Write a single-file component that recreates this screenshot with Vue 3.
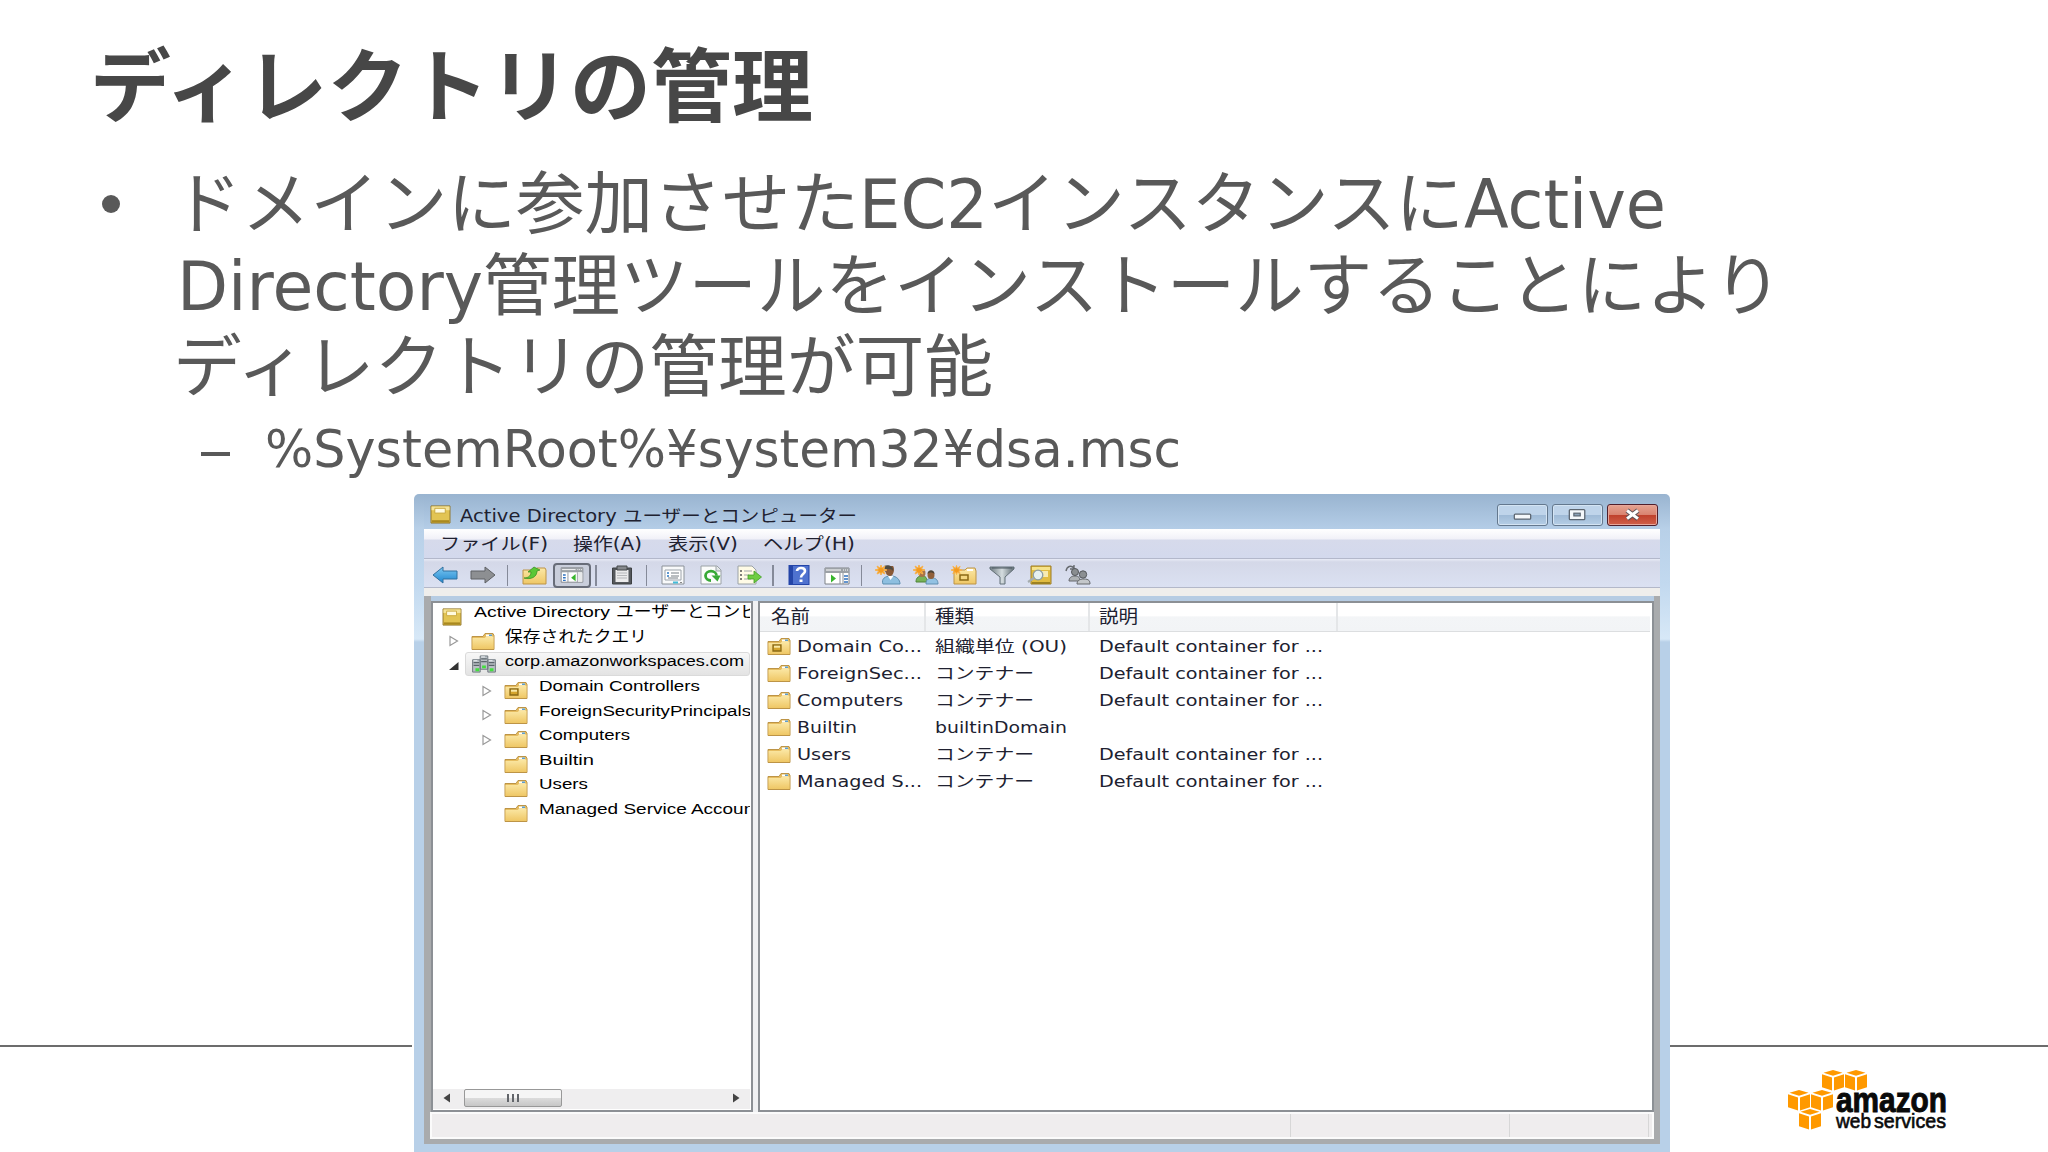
<script setup>
const lines = [
  [
    { text: "ドメインに参加させた", width: 686 },
    { text: "EC2", width: 129 },
    { text: "インスタンスに", width: 476 },
    { text: "Active", width: 202 },
  ],
  [
    { text: "Directory", width: 306 },
    { text: "管理ツールをインストールすることにより", width: 1299 },
  ],
  [{ text: "ディレクトリの管理が可能", width: 820 }],
];

const menus = [
  { text: "ファイル(F)", width: 108, slot: 133 },
  { text: "操作(A)", width: 69, slot: 95 },
  { text: "表示(V)", width: 70, slot: 95 },
  { text: "ヘルプ(H)", width: 92, slot: 100 },
];

const tools = [
  "back", "forward", "sep", "up", "panel", "sep", "clipboard", "sep",
  "props", "refresh", "export", "sep", "help", "run", "sep",
  "user", "group", "new-ou", "filter", "find", "add-group",
];

const tree = [
  { text: "保存されたクエリ", width: 142, icon: "folder", arrow: "closed", level: 1 },
  { text: "corp.amazonworkspaces.com", width: 239, icon: "domain", arrow: "open", level: 1, selected: true },
  { text: "Domain Controllers", width: 161, icon: "ou", arrow: "closed", level: 2 },
  { text: "ForeignSecurityPrincipals", width: 212, icon: "folder", arrow: "closed", level: 2 },
  { text: "Computers", width: 91, icon: "folder", arrow: "closed", level: 2 },
  { text: "Builtin", width: 55, icon: "folder", level: 2 },
  { text: "Users", width: 49, icon: "folder", level: 2 },
  { text: "Managed Service Accounts", width: 230, icon: "folder", level: 2 },
];

const desc = "Default container for ...";
const rows = [
  { name: "Domain Co...", width: 125, icon: "ou", type: "組織単位 (OU)", typeWidth: 132, desc },
  { name: "ForeignSec...", width: 125, icon: "folder", type: "コンテナー", typeWidth: 99, desc },
  { name: "Computers", width: 106, icon: "folder", type: "コンテナー", typeWidth: 99, desc },
  { name: "Builtin", width: 60, icon: "folder", type: "builtinDomain", typeWidth: 132, desc: "" },
  { name: "Users", width: 54, icon: "folder", type: "コンテナー", typeWidth: 99, desc },
  { name: "Managed S...", width: 125, icon: "folder", type: "コンテナー", typeWidth: 99, desc },
];

// squeeze or stretch a label to the given width
const vFit = {
  mounted(el, { value }) {
    const natural = el.getBoundingClientRect().width;
    if (!natural) return;
    el.style.transform = `scaleX(${value / natural})`;
    el.style.marginRight = `${value - natural}px`;
  },
};
</script>

<template>
  <svg class="defs" width="0" height="0">
    <defs>
      <linearGradient id="gold" x1="0" y1="0" x2="0" y2="1">
        <stop offset="0" stop-color="#fbe8a6" />
        <stop offset="1" stop-color="#efc765" />
      </linearGradient>
      <linearGradient id="blue" x1="0" y1="0" x2="0" y2="1">
        <stop offset="0" stop-color="#7cc8f2" />
        <stop offset="1" stop-color="#1f86cf" />
      </linearGradient>
      <linearGradient id="steel" x1="0" y1="0" x2="1" y2="0">
        <stop offset="0" stop-color="#6d7a80" />
        <stop offset="0.5" stop-color="#d5dde0" />
        <stop offset="1" stop-color="#606d74" />
      </linearGradient>
    </defs>
    <symbol id="book" viewBox="0 0 22 20">
      <path d="M1 1h20v18H1z" fill="#e2c453" stroke="#8e7429" />
      <path d="M1.500 1.500h19v4h-19z" fill="#f4e39a" />
      <path d="M5 3.500h11v5H5z" fill="#fffbe0" stroke="#c9a83d" />
      <path d="M2 16h18v2.500H2z" fill="#a98920" />
    </symbol>
    <symbol id="folder" viewBox="0 0 24 18">
      <path d="M1 4.500h11l2-3h8l1 2v14H1z" fill="#e6bd60" stroke="#bd9446" />
      <path d="M15 2.500h6v2h-6z" fill="#fff" />
      <path d="M18 2.500h3v1.500h-3z" fill="#5c9fce" />
      <path d="M1.500 6h12l2-1.500h7v12.500h-21z" fill="url(#gold)" />
    </symbol>
    <symbol id="ou" viewBox="0 0 24 18">
      <use href="#folder" />
      <path d="M6 8h8v6H6z" fill="#d5a52d" stroke="#8b6914" stroke-width="1.300" />
      <path d="M7 8.700h6v2H7z" fill="#f9e9a9" />
    </symbol>
    <symbol id="domain" viewBox="0 0 26 20">
      <g fill="#b9c0c5" stroke="#6d767d">
        <path d="M9 1h8v14H9zM1 5h8v13H1zM17 5h8v13h-8z" />
      </g>
      <path d="M10 4h6M10 7h6M2 8h6M2 11h6M18 8h6M18 11h6" stroke="#5b646b" stroke-width="1.300" />
      <path d="M10 2h4M2 6h4M18 6h4" stroke="#eef2f4" />
      <path d="M11 11h4v3h-4zM4 14h4v3H4zM19 14h4v3h-4z" fill="#43df3f" />
    </symbol>
    <symbol id="back" viewBox="0 0 26 20">
      <path d="M1 10L11 2v4h14v8H11v4z" fill="url(#blue)" stroke="#31709f" stroke-linejoin="round" />
    </symbol>
    <symbol id="forward" viewBox="0 0 26 20">
      <path d="M25 10L15 2v4H1v8h14v4z" fill="#8d8f92" stroke="#5e6064" stroke-linejoin="round" />
    </symbol>
    <symbol id="up" viewBox="0 0 26 20">
      <path d="M2 5h12l2-2h8l1 2v14H2z" fill="url(#gold)" stroke="#bd9446" />
      <path d="M3 13c5 0 7-3 7-6H7l6-5 6 3-3 1c0 6-6 9-13 7z" fill="#5bc736" stroke="#31891e" stroke-width="0.700" />
    </symbol>
    <symbol id="panel" viewBox="0 0 26 20">
      <path d="M1 2h24v16H1z" fill="#fff" stroke="#7e8287" />
      <path d="M1 2h24v5H1z" fill="#9ca1a6" />
      <path d="M2 4h15" stroke="#fff" />
      <path d="M19 4h1M21 4h1M23 4h1" stroke="#fff" />
      <path d="M8.500 7v11M19 7v11" stroke="#8d9298" />
      <path d="M3 10h3M3 13h3M3 16h3" stroke="#3172bf" stroke-width="1.500" />
      <path d="M17 9v8l-5-4z" fill="#38b52d" />
      <path d="M19.500 7.500h5v10h-5z" fill="#e7e9ea" />
    </symbol>
    <symbol id="clipboard" viewBox="0 0 26 20">
      <path d="M3.500 3h19v16h-19z" fill="#55585c" stroke="#3d4043" />
      <path d="M6.500 5h13v12h-13z" fill="#ebebec" />
      <path d="M8 1h10v4H8z" fill="#85888c" stroke="#45484b" />
      <path d="M8 8h10M8 10.500h10M8 13h10" stroke="#b5b7ba" />
    </symbol>
    <symbol id="props" viewBox="0 0 26 20">
      <path d="M2 1h22v18H2z" fill="#f8f9fa" stroke="#8b9198" />
      <path d="M5 5h16v10H5z" fill="#fff" stroke="#9ca3aa" />
      <path d="M7 8h2M7 11h2" stroke="#2d78c2" stroke-width="1.500" />
      <path d="M11 8h8M11 11h8M8 13h10" stroke="#777e85" />
      <path d="M13 17.500h5" stroke="#43bbd9" stroke-width="2" />
      <path d="M20 17.500h2" stroke="#888" />
    </symbol>
    <symbol id="refresh" viewBox="0 0 26 20">
      <path d="M3 1h16l4 4v14H3z" fill="#fbfcfb" stroke="#9ba2a6" />
      <path d="M18 1v5h5" fill="#dfe4e6" stroke="#9ba2a6" />
      <path d="M13 15.500a5.500 4.700 0 1 1 5.500-4.700" fill="none" stroke="#38a936" stroke-width="2.800" />
      <path d="M13.500 10.500h9l-3 6z" fill="#38a936" />
    </symbol>
    <symbol id="export" viewBox="0 0 26 20">
      <path d="M2 1h14l4 4v14H2z" fill="#fffbe6" stroke="#9ba2a6" />
      <path d="M4 6h2M4 10h2M4 14h2" stroke="#555" stroke-width="1.500" />
      <path d="M8 6h8M8 10h5M8 14h7" stroke="#a0a5a8" />
      <path d="M12 10h6V6l7.500 6-7.500 6v-4h-6z" fill="#6fcd43" stroke="#419f25" stroke-width="0.800" />
    </symbol>
    <symbol id="help" viewBox="0 0 26 20">
      <path d="M2.500 0h21v20h-21z" fill="#2445a8" />
      <path d="M7 1h15.500v18H7z" fill="#4f72cf" />
      <path d="M11 6c0-4 8-4 8 0 0 3-4 3-4 6.500" fill="none" stroke="#fff" stroke-width="2.600" />
      <path d="M13.500 14.500h3v2.500h-3z" fill="#fff" />
    </symbol>
    <symbol id="run" viewBox="0 0 26 20">
      <path d="M1 3h24v16H1z" fill="#fff" stroke="#7e8287" />
      <path d="M1 3h24v5H1z" fill="#9ca1a6" />
      <path d="M2 5h15M19 5h1M21 5h1M23 5h1" stroke="#fff" />
      <path d="M16 8v11M19 8v11" stroke="#8d9298" />
      <path d="M7 9.500v8l5-4z" fill="#38b52d" />
      <path d="M20 11h4M20 14h4M20 17h4" stroke="#3172bf" stroke-width="1.300" />
    </symbol>
    <symbol id="spark" viewBox="0 0 12 10">
      <path d="M6 0l1 3 3-2-1.500 3 3.500 1-3.500 1L10 9 7 7.500 6 10 5 7.500 2 9l1.500-3L0 5l3.500-1L2 1l3 2z" fill="#f49a1d" stroke="#f7b24d" />
    </symbol>
    <symbol id="user" viewBox="0 0 26 20">
      <path d="M8 19c-2-5 2-8 8-8s9 4 9 8z" fill="#8ebfe0" stroke="#5d8fb1" />
      <path d="M13 11l2.500 4 3-4z" fill="#fff" />
      <path d="M10 1h8c2 2 1 10-3 10-4 0-4-4-5-5z" fill="#8b5a37" />
      <path d="M9 1c4-2 10 0 9 5-1-2-4-2-6-2-1 0-1 2-2 3z" fill="#4e4b42" />
      <use href="#spark" x="0" y="0" width="12" height="10" />
    </symbol>
    <symbol id="group" viewBox="0 0 26 20">
      <path d="M3 17c0-4 2-6 6-6s5 2 5 6z" fill="#77b257" stroke="#4e8338" />
      <ellipse cx="9" cy="8" rx="3.500" ry="4" fill="#a77347" />
      <path d="M13 19c0-4 2-6 6-6s6 2 6 6z" fill="#93c2e3" stroke="#6190b2" />
      <ellipse cx="18" cy="10" rx="3.500" ry="4" fill="#91603b" />
      <path d="M14.500 9c0-5 7-5 7 0-2-2-5-2-7 0z" fill="#4c4336" />
      <use href="#spark" x="0" y="0" width="12" height="10" />
    </symbol>
    <symbol id="new-ou" viewBox="0 0 26 20">
      <path d="M3 5h11l2-2h8l1 3v13H3z" fill="url(#gold)" stroke="#bd9446" />
      <path d="M16 4h6v2h-6z" fill="#fff" />
      <path d="M9 10h8v5H9z" fill="#f4d781" stroke="#8b6914" stroke-width="1.500" />
      <use href="#spark" x="0" y="0" width="11" height="10" />
    </symbol>
    <symbol id="filter" viewBox="0 0 26 20">
      <path d="M1 2h24v2l-9 8v7h-5v-7L1 4z" fill="url(#steel)" stroke="#637078" />
      <path d="M3 3h20" stroke="#4b575e" />
    </symbol>
    <symbol id="find" viewBox="0 0 26 20">
      <path d="M4 1h20v18H4z" fill="#e1bc42" stroke="#9c7d25" />
      <path d="M5 2h18v3H5z" fill="#f6e38a" />
      <path d="M10 6h11v6H10z" fill="#f7eab0" />
      <path d="M5 17h18v2H5z" fill="#9d8122" />
      <circle cx="11" cy="10" r="4.800" fill="#e6f0ef" stroke="#8d9ca0" stroke-width="1.300" />
      <path d="M7 13l-6 4" stroke="#a5acae" stroke-width="2.200" />
    </symbol>
    <symbol id="add-group" viewBox="0 0 26 20">
      <path d="M1 6c1-5 5-6 8-3M9 0v4H5" fill="none" stroke="#666a6e" stroke-width="1.400" />
      <path d="M4 16c0-3 2-5 6-5s5 2 5 5z" fill="#aeb2b5" stroke="#66696d" />
      <circle cx="10" cy="7" r="3.500" fill="#898d90" stroke="#55585c" />
      <path d="M12 19c0-3 2-5 7-5s6 2 6 5z" fill="#c4c7ca" stroke="#66696d" />
      <circle cx="18" cy="9.500" r="3.700" fill="#8b8f92" stroke="#55585c" />
    </symbol>
    <symbol id="cube" viewBox="0 0 22 21">
      <path d="M1.500 2.800L11 0l9.500 2.800L11 5.800zM0 4.300l10 3.100v13L0 17.300zM22 4.300L12 7.400v13l10-3.100z" fill="#ff9900" />
    </symbol>
  </svg>

  <main class="slide">
    <header class="intro">
      <h1 class="title"><span v-fit="723" class="fit">ディレクトリの管理</span></h1>
      <div class="point">
        <i class="dot"></i>
        <div>
          <p v-for="(line, i) in lines" :key="i" class="line">
            <span v-for="part in line" :key="part.text" v-fit="part.width" class="fit">{{ part.text }}</span>
          </p>
        </div>
      </div>
      <div class="subpoint">
        <i class="dash"></i>
        <p>
          <span v-fit="401" class="fit">%SystemRoot%</span>
          <span v-fit="515" class="fit">¥system32¥dsa.msc</span>
        </p>
      </div>
    </header>

    <div class="stage">
      <aside class="side left"></aside>

      <section class="window">
        <div class="titlebar">
          <svg class="app-icon"><use href="#book" /></svg>
          <span v-fit="397" class="fit caption">Active Directory ユーザーとコンピューター</span>
          <div class="controls">
            <button type="button" class="control">
              <svg viewBox="0 0 50 22"><rect x="16" y="10" width="18" height="5.500" rx="1" fill="#f4f7fa" stroke="#5b6570" stroke-width="1.400" /></svg>
            </button>
            <button type="button" class="control">
              <svg viewBox="0 0 50 22">
                <rect x="16" y="5" width="17" height="11" rx="1" fill="#f4f7fa" stroke="#5b6570" stroke-width="1.400" />
                <rect x="21" y="9" width="7" height="3" fill="#8ba2b8" stroke="#5b6570" stroke-width="1.300" />
              </svg>
            </button>
            <button type="button" class="control close">
              <svg viewBox="0 0 50 22">
                <path d="M19 6l12 9M31 6L19 15" stroke="#5e5258" stroke-width="5.500" />
                <path d="M19 6l12 9M31 6L19 15" stroke="#fff" stroke-width="3.400" />
              </svg>
            </button>
          </div>
        </div>

        <div class="client">
          <nav class="menubar">
            <div v-for="menu in menus" :key="menu.text" :style="{ width: menu.slot + 'px' }">
              <span v-fit="menu.width" class="fit">{{ menu.text }}</span>
            </div>
          </nav>
          <div class="toolbar">
            <div v-for="(tool, i) in tools" :key="i" class="tool" :class="tool">
              <svg v-if="tool !== 'sep'"><use :href="'#' + tool" /></svg>
            </div>
          </div>
          <div class="strip"></div>

          <div class="body">
            <div class="panes">
              <div class="tree">
                <div class="node root">
                  <svg class="root-icon"><use href="#book" /></svg>
                  <span v-fit="136" class="fit">Active Directory</span>
                  <span v-fit="142" class="fit root-tail">ユーザーとコンピ</span>
                </div>
                <div v-for="node in tree" :key="node.text" class="node" :class="'level-' + node.level">
                  <div class="arrow">
                    <svg v-if="node.arrow === 'closed'" viewBox="0 0 10 12"><path d="M1 1.500l7.500 4.500L1 10.500z" fill="#fff" stroke="#999" stroke-width="1.200" /></svg>
                    <svg v-if="node.arrow === 'open'" viewBox="0 0 10 12"><path d="M9.500 2v8H0z" fill="#333" /></svg>
                  </div>
                  <div class="label" :class="{ selected: node.selected }">
                    <svg class="node-icon" :class="node.icon"><use :href="'#' + node.icon" /></svg>
                    <span v-fit="node.width" class="fit">{{ node.text }}</span>
                  </div>
                </div>
                <div class="scrollbar">
                  <svg class="scroll-arrow" viewBox="0 0 8 10"><path d="M7 0.500v9L0.500 5z" fill="#444" /></svg>
                  <div class="thumb"><i></i><i></i><i></i></div>
                  <svg class="scroll-arrow end" viewBox="0 0 8 10"><path d="M1 0.500v9L7.500 5z" fill="#444" /></svg>
                </div>
              </div>

              <div class="list">
                <div class="list-head">
                  <div><span v-fit="39" class="fit">名前</span></div>
                  <div><span v-fit="39" class="fit">種類</span></div>
                  <div><span v-fit="39" class="fit">説明</span></div>
                </div>
                <div v-for="row in rows" :key="row.name" class="list-row">
                  <div class="name">
                    <svg><use :href="'#' + row.icon" /></svg>
                    <span v-fit="row.width" class="fit">{{ row.name }}</span>
                  </div>
                  <div><span v-fit="row.typeWidth" class="fit">{{ row.type }}</span></div>
                  <div><span v-fit="224" class="fit">{{ row.desc }}</span></div>
                </div>
              </div>
            </div>
            <div class="status"><i></i><i></i><i></i></div>
          </div>
        </div>
      </section>

      <aside class="side right">
        <div class="logo">
          <div class="cubes">
            <div class="cube-row top"><svg><use href="#cube" /></svg><svg><use href="#cube" /></svg></div>
            <div class="cube-row"><svg><use href="#cube" /></svg><svg><use href="#cube" /></svg></div>
            <div class="cube-row bottom"><svg><use href="#cube" /></svg></div>
          </div>
          <div class="brand">
            <div class="amazon"><span v-fit="111" class="fit">amazon</span></div>
            <div class="services">
              <span v-fit="35" class="fit">web</span>
              <span v-fit="72" class="fit">services</span>
            </div>
          </div>
        </div>
      </aside>
    </div>
  </main>
</template>

<style>
body {
  margin: 0;
  background: #fff;
}
</style>

<style scoped>
.defs {
  display: block;
  position: absolute;
}
.slide {
  width: 2048px;
  height: 1152px;
  overflow: hidden;
  color: #595959;
  background: #fff;
  font-family: "DejaVu Sans", "Noto Sans CJK JP", sans-serif;
}
.fit {
  display: inline-block;
  flex: none;
  white-space: nowrap;
  transform-origin: 0 50%;
}

/* slide text */
.intro {
  height: 494px;
  box-sizing: border-box;
  padding: 20px 0 0 94px;
}
.title {
  margin: 0 0 0 -4px;
  height: 120px;
  color: #474747;
  font-family: "Noto Sans CJK JP", sans-serif;
  font-size: 80px;
  font-weight: 700;
  line-height: 120px;
}
.point {
  display: flex;
  padding-top: 24px;
}
.dot {
  width: 18px;
  height: 18px;
  margin: 31px 57px 0 8px;
  border-radius: 50%;
  background: #595959;
}
.line {
  display: flex;
  height: 81.500px;
  margin: 0;
  font-size: 68px;
  line-height: 81.500px;
}
.line:nth-child(odd) {
  margin-left: -4px;
}
.subpoint {
  display: flex;
  align-items: center;
  height: 66px;
  padding: 7px 0 0 107px;
  font-size: 52px;
  line-height: 66px;
}
.subpoint p {
  display: flex;
  margin: 0;
}
.dash {
  width: 29px;
  height: 4px;
  margin: 11px 35px 0 0;
  background: #595959;
}

/* stage */
.stage {
  display: grid;
  grid-template-columns: 414px 1256px 1fr;
  height: 658px;
}
.side {
  margin-top: 551px;
  border-top: 2px solid #6c6c6c;
}
.side.left {
  margin-right: 2px;
}

/* window frame */
.window {
  display: flex;
  flex-direction: column;
  box-sizing: border-box;
  padding: 0 10px 8px;
  border-radius: 5px 5px 0 0;
  background: linear-gradient(#99b4d0 0, #b8d0e8 35px, #c2d9ef 90px, #d7e8f7 145px, #b8d0e8 148px);
  color: #202130;
}
.titlebar {
  display: flex;
  align-items: center;
  height: 35px;
  padding-left: 6px;
  font-size: 17px;
  line-height: 34px;
  background: linear-gradient(#99b4d0, #b4cde7);
}
.app-icon {
  width: 21px;
  height: 19px;
  margin: 6px 9px 0 0;
}
.caption {
  margin-top: 8px;
}
.controls {
  display: flex;
  gap: 4px;
  margin: 7px 2px 0 auto;
}
.control {
  box-sizing: border-box;
  width: 51px;
  height: 22px;
  padding: 0;
  border: 1.500px solid #64788e;
  border-radius: 3px;
  background: linear-gradient(#bfd4ea 50%, #9fbad6 50%, #b5cee6);
  box-shadow: inset 0 0 0 1px #d4e4f3;
}
.control svg {
  display: block;
  width: 100%;
  height: 100%;
}
.control.close {
  border-color: #501f2b;
  background: linear-gradient(#e5a391 0, #d9826f 50%, #bf402b 50%, #d0604a);
  box-shadow: inset 0 0 0 1px #e7a69a;
}
.client {
  display: flex;
  flex: 1;
  flex-direction: column;
}
.menubar {
  display: flex;
  height: 30px;
  box-sizing: border-box;
  padding-left: 16px;
  border-bottom: 1px solid #b3b8cb;
  background: linear-gradient(#fff 0, #f1f1f8 10px, #d6daeb 11px, #d3d9ed);
  font-size: 17px;
  line-height: 31px;
}
.toolbar {
  display: flex;
  align-items: center;
  height: 29px;
  box-sizing: border-box;
  padding: 4px 0 0 2px;
  border-bottom: 1.500px solid #b3b8c9;
  background: linear-gradient(#e8ebf6 0, #d4d8e8 3px, #dbe1f2);
}
.tool {
  display: flex;
  align-items: center;
  justify-content: center;
  width: 38.050px;
  height: 24px;
}
.tool svg {
  width: 26px;
  height: 20px;
}
.tool.sep {
  width: 12.500px;
}
.tool.sep::before {
  content: "";
  width: 1.500px;
  height: 21px;
  margin-right: 2px;
  background: #858a99;
}
.tool.panel {
  box-sizing: border-box;
  height: 25px;
  border: 2px solid #686d79;
  border-radius: 4px;
  background: #c9cedb;
}
.tool.panel svg {
  height: 18px;
}
.strip {
  height: 8px;
  background: #efeeec;
}
.body {
  display: flex;
  flex: 1;
  flex-direction: column;
  box-sizing: border-box;
  padding: 0 6px 5px 7px;
  background: #a9abad;
}

/* panes */
.panes {
  display: grid;
  grid-template-columns: 322px 896px;
  gap: 5px;
  height: 516px;
  box-sizing: border-box;
  padding-top: 5px;
  background: linear-gradient(#b6cce3 5px, #f0f1f3 5px);
}
.tree,
.list {
  box-sizing: border-box;
  min-width: 0;
  overflow: hidden;
  border: 2px solid #8c9095;
  background: #fff;
}
.tree {
  display: flex;
  flex-direction: column;
  padding-right: 1px;
  color: #000;
  font-family: "Liberation Sans", "Noto Sans CJK JP", sans-serif;
  font-size: 15.500px;
}
.node {
  display: flex;
  flex: none;
  align-items: center;
  height: 24.600px;
  overflow: hidden;
  line-height: 18px;
}
.node.root {
  padding-left: 9px;
}
.root .fit {
  margin-top: -6px;
}
.root-icon {
  flex: none;
  width: 20px;
  height: 18px;
  margin: 4px 12px 0 0;
}
.root-tail {
  margin-left: 6px;
}
.arrow {
  flex: none;
  width: 10px;
  height: 12px;
  margin: 3px 6px 0 16px;
}
.arrow svg {
  display: block;
  width: 10px;
  height: 12px;
}
.level-2 .arrow {
  margin-left: 49px;
}
.label {
  display: flex;
  flex: 1;
  align-items: center;
  height: 24px;
  box-sizing: border-box;
  padding-left: 5px;
  border: 1px solid transparent;
  border-radius: 3px;
  min-width: 0;
}
.label .fit {
  margin-top: -6px;
}
.label.selected {
  border-color: #dadada;
  background: linear-gradient(#f7f7f7, #e3e3e3);
}
.node-icon {
  flex: none;
  width: 24px;
  height: 18px;
  margin: 2px 10px 0 0;
}
.level-2 .node-icon {
  margin-right: 11px;
}
.node-icon.domain {
  width: 26px;
  height: 19px;
  margin: 0 8px 0 0;
}
.scrollbar {
  display: flex;
  height: 20px;
  box-sizing: border-box;
  margin: auto 0 1px;
  padding-left: 10px;
  background: #efeeef;
}
.scroll-arrow {
  width: 8px;
  height: 10px;
  margin-top: 4px;
}
.scroll-arrow.end {
  margin: 4px 10px 0 auto;
}
.thumb {
  display: flex;
  gap: 3px;
  align-items: center;
  justify-content: center;
  box-sizing: border-box;
  width: 98px;
  height: 18px;
  margin-left: 13px;
  border: 1.500px solid #989898;
  border-radius: 2px;
  background: linear-gradient(#f5f5f5 50%, #dcdcdc 50%, #c6c6c6);
}
.thumb i {
  width: 2px;
  height: 8px;
  background: #62656a;
}

/* list */
.list {
  font-size: 16px;
}
.list-head,
.list-row {
  display: grid;
  grid-template-columns: 166px 164px 248px 1fr;
}
.list-head {
  height: 29px;
  box-sizing: border-box;
  margin-right: 2px;
  border-bottom: 1.500px solid #dcdee0;
  background: linear-gradient(#fff 45%, #f3f5f7 50%, #f2f4f6);
  font-size: 18px;
  line-height: 28px;
}
.list-head div {
  height: 27.500px;
  box-sizing: border-box;
  padding-left: 11px;
  border-right: 2px solid #e4e6e8;
}
.list-head div + div {
  padding-left: 9px;
}
.list-row {
  align-items: center;
  height: 27.100px;
  line-height: 29px;
}
.list-row > div {
  display: flex;
  align-items: center;
  height: 28px;
  padding-left: 9px;
  min-width: 0;
}
.list-row .name {
  padding-left: 7px;
}
.name svg {
  flex: none;
  width: 24px;
  height: 18px;
  margin-right: 6px;
}

.status {
  display: grid;
  grid-template-columns: 859px 219px 139px;
  height: 27px;
  box-sizing: border-box;
  margin-left: -1px;
  border: 2px solid #fbfbfb;
  background: #efedee;
}
.status i {
  box-sizing: border-box;
  border-right: 1.500px solid #d7d7d7;
}

/* logo */
.logo {
  display: flex;
  padding: 23px 0 0 118px;
}
.cubes {
  width: 46px;
}
.cube-row {
  display: flex;
  gap: 1px;
  height: 19.500px;
}
.cube-row svg {
  flex: none;
  width: 22px;
  height: 21px;
}
.cube-row.top {
  margin-left: 34px;
}
.cube-row.bottom {
  margin-left: 11px;
}
.brand {
  color: #0a0a0a;
  font-family: "Liberation Sans", sans-serif;
}
.amazon {
  height: 26px;
  margin: 17px 0 0 2px;
  font-size: 35px;
  font-weight: 700;
  line-height: 26px;
  -webkit-text-stroke: 1px #0a0a0a;
}
.services {
  display: flex;
  gap: 3px;
  margin-left: 2px;
  font-size: 20px;
  line-height: 17px;
  -webkit-text-stroke: 0.600px #0a0a0a;
}
</style>
